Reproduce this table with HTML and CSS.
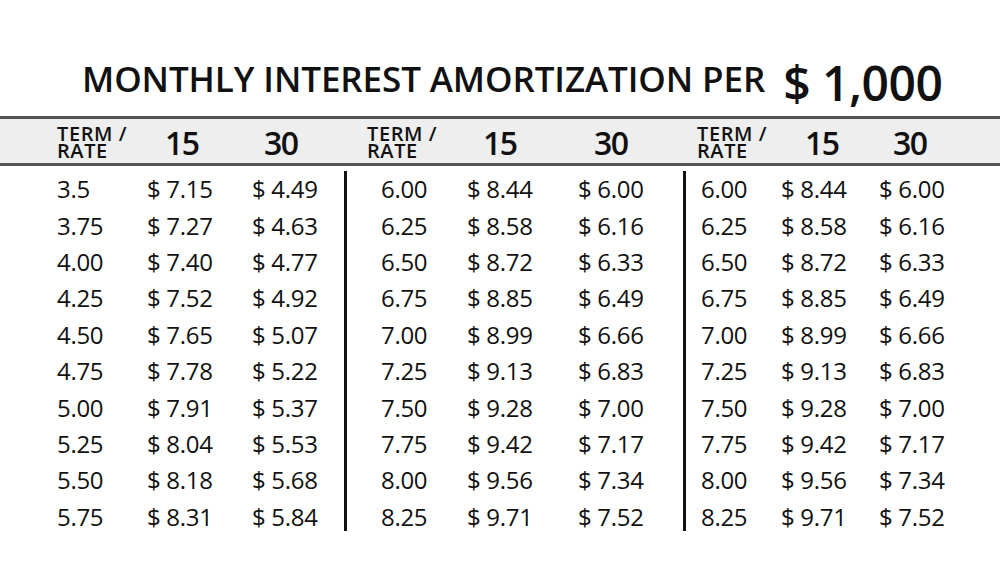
FILE: index.html
```html
<!DOCTYPE html>
<html>
<head>
<meta charset="utf-8">
<link rel="stylesheet" href="styles.css">
</head>
<body>
<div class="page">
  <h1 class="title"><span class="title-text">MONTHLY INTEREST AMORTIZATION PER</span><span class="title-amount">$ 1,000</span></h1>

  <div class="head">
    <div class="h-term">TERM /<br>RATE</div>
    <div class="h-num">15</div>
    <div class="h-num">30</div>
    <div class="h-term">TERM /<br>RATE</div>
    <div class="h-num">15</div>
    <div class="h-num">30</div>
    <div class="h-term">TERM /<br>RATE</div>
    <div class="h-num">15</div>
    <div class="h-num">30</div>
  </div>

  <div class="body">
    <div class="group group1">
      <span>3.5</span><span>$ 7.15</span><span>$ 4.49</span>
      <span>3.75</span><span>$ 7.27</span><span>$ 4.63</span>
      <span>4.00</span><span>$ 7.40</span><span>$ 4.77</span>
      <span>4.25</span><span>$ 7.52</span><span>$ 4.92</span>
      <span>4.50</span><span>$ 7.65</span><span>$ 5.07</span>
      <span>4.75</span><span>$ 7.78</span><span>$ 5.22</span>
      <span>5.00</span><span>$ 7.91</span><span>$ 5.37</span>
      <span>5.25</span><span>$ 8.04</span><span>$ 5.53</span>
      <span>5.50</span><span>$ 8.18</span><span>$ 5.68</span>
      <span>5.75</span><span>$ 8.31</span><span>$ 5.84</span>
    </div>
    <div class="group group2">
      <span>6.00</span><span>$ 8.44</span><span>$ 6.00</span>
      <span>6.25</span><span>$ 8.58</span><span>$ 6.16</span>
      <span>6.50</span><span>$ 8.72</span><span>$ 6.33</span>
      <span>6.75</span><span>$ 8.85</span><span>$ 6.49</span>
      <span>7.00</span><span>$ 8.99</span><span>$ 6.66</span>
      <span>7.25</span><span>$ 9.13</span><span>$ 6.83</span>
      <span>7.50</span><span>$ 9.28</span><span>$ 7.00</span>
      <span>7.75</span><span>$ 9.42</span><span>$ 7.17</span>
      <span>8.00</span><span>$ 9.56</span><span>$ 7.34</span>
      <span>8.25</span><span>$ 9.71</span><span>$ 7.52</span>
    </div>
    <div class="group group3">
      <span>6.00</span><span>$ 8.44</span><span>$ 6.00</span>
      <span>6.25</span><span>$ 8.58</span><span>$ 6.16</span>
      <span>6.50</span><span>$ 8.72</span><span>$ 6.33</span>
      <span>6.75</span><span>$ 8.85</span><span>$ 6.49</span>
      <span>7.00</span><span>$ 8.99</span><span>$ 6.66</span>
      <span>7.25</span><span>$ 9.13</span><span>$ 6.83</span>
      <span>7.50</span><span>$ 9.28</span><span>$ 7.00</span>
      <span>7.75</span><span>$ 9.42</span><span>$ 7.17</span>
      <span>8.00</span><span>$ 9.56</span><span>$ 7.34</span>
      <span>8.25</span><span>$ 9.71</span><span>$ 7.52</span>
    </div>
  </div>
</div>
</body>
</html>
```

FILE: styles.css
```css
html, body {
  margin: 0;
  padding: 0;
  background: #ffffff;
}

.page {
  width: 1000px;
  height: 586px;
  font-family: "Open Sans", "Liberation Sans", sans-serif;
  color: #111111;
  overflow: hidden;
}

.title {
  margin: 0;
  height: 116px;
  box-sizing: border-box;
  padding: 41px 0 0 82px;
  display: flex;
  align-items: center;
  font-weight: 600;
}

.title-text {
  font-size: 35px;
  line-height: 52px;
  letter-spacing: -0.1px;
}

.title-amount {
  font-size: 48px;
  line-height: 52px;
  margin-left: 18px;
  margin-top: 8px;
  letter-spacing: -0.5px;
}

.head {
  height: 44px;
  background: #eeeeee;
  border-top: 3px solid #555555;
  border-bottom: 3px solid #555555;
  display: grid;
  grid-template-columns: 108px 99px 103px 116px 111px 103px 108px 88px 1fr;
  padding-left: 57px;
  align-items: center;
}

.h-term {
  font-size: 20px;
  font-weight: 600;
  line-height: 17px;
  letter-spacing: 0.6px;
  padding-top: 2px;
  white-space: nowrap;
}

.h-num {
  font-size: 32px;
  font-weight: 600;
  line-height: 40px;
  padding-top: 4px;
  letter-spacing: -1.5px;
}

.body {
  display: flex;
  padding-top: 5px;
}

.group {
  display: grid;
  grid-auto-rows: 36.4px;
  align-items: center;
  font-size: 24px;
  line-height: 36px;
  height: 360px;
  letter-spacing: -0.3px;
}

.group1 {
  width: 287px;
  padding-left: 57px;
  grid-template-columns: 90px 105px 1fr;
}

.group2 {
  width: 302px;
  padding-left: 34px;
  border-left: 3px solid #111111;
  grid-template-columns: 86px 111px 1fr;
}

.group3 {
  flex: 1;
  padding-left: 15px;
  border-left: 3px solid #111111;
  grid-template-columns: 80px 98px 1fr;
}
```
